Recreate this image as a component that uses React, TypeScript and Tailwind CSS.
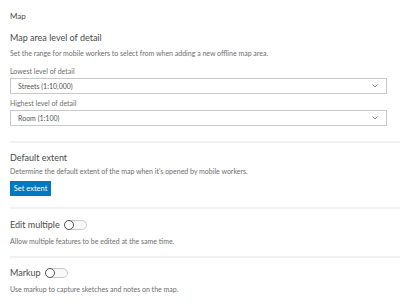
const Chevron = () => (
    <svg width="6" height="4" viewBox="0 0 6 4" className="text-[#6a6a6a]">
        <path d="M0.5 0.5 L3 3 L5.5 0.5" fill="none" stroke="currentColor" strokeWidth="0.8" />
    </svg>
);

const Select = ({ value }: { value: string }) => (
    <div className="mr-[13px] mt-[2px] flex h-[16px] items-center justify-between border border-[#cacaca] bg-white pl-[7px] pr-[8px]">
        <span className="text-[7px] text-[#555]">{value}</span>
        <Chevron />
    </div>
);

const Toggle = () => (
    <div className="relative ml-[4px] h-[10px] w-[23px] rounded-full border border-[#cacaca] bg-[#f8f8f8]">
        <div className="absolute left-[-1px] top-[-1px] h-[10px] w-[10px] rounded-full border border-[#555] bg-white" />
    </div>
);

const Divider = ({ className }: { className: string }) => (
    <div className={`h-[2px] bg-[#f1f1f1] ${className}`} />
);

export default function App() {
    return (
        <div className="h-[304px] w-[400px] overflow-hidden bg-white pl-[10px] font-['Lato',sans-serif] text-[#4a4a4a]">
            <div className="mt-[10px] text-[8px] leading-[12px]">Map</div>

            <div className="mt-[9px] text-[9px] leading-[14px]">Map area level of detail</div>
            <div className="mt-[3px] text-[7px] leading-[10px] text-[#6e6e6e]">
                Set the range for mobile workers to select from when adding a new offline map area.
            </div>

            <div className="mt-[8px] text-[7px] leading-[10px] text-[#6e6e6e]">Lowest level of detail</div>
            <Select value="Streets (1:10,000)" />
            <div className="mt-[4px] text-[7px] leading-[10px] text-[#6e6e6e]">Highest level of detail</div>
            <Select value="Room (1:100)" />

            <Divider className="mt-[15px]" />

            <div className="mt-[8px] text-[9px] leading-[14px]">Default extent</div>
            <div className="mt-[1px] text-[7px] leading-[10px] text-[#6e6e6e]">
                Determine the default extent of the map when it's opened by mobile workers.
            </div>
            <button className="mt-[5px] flex h-[15px] w-[41px] items-center justify-center bg-[#0079c1] text-[7.5px] text-white">
                Set extent
            </button>

            <Divider className="mt-[11px]" />

            <div className="mt-[9px] flex h-[14px] items-center">
                <span className="text-[9px]">Edit multiple</span>
                <Toggle />
            </div>
            <div className="mt-[4px] text-[7px] leading-[10px] text-[#6e6e6e]">
                Allow multiple features to be edited at the same time.
            </div>

            <Divider className="mt-[10px]" />

            <div className="mt-[8px] flex h-[14px] items-center">
                <span className="text-[9px]">Markup</span>
                <Toggle />
            </div>
            <div className="mt-[4px] text-[7px] leading-[10px] text-[#6e6e6e]">
                Use markup to capture sketches and notes on the map.
            </div>
        </div>
    );
}
